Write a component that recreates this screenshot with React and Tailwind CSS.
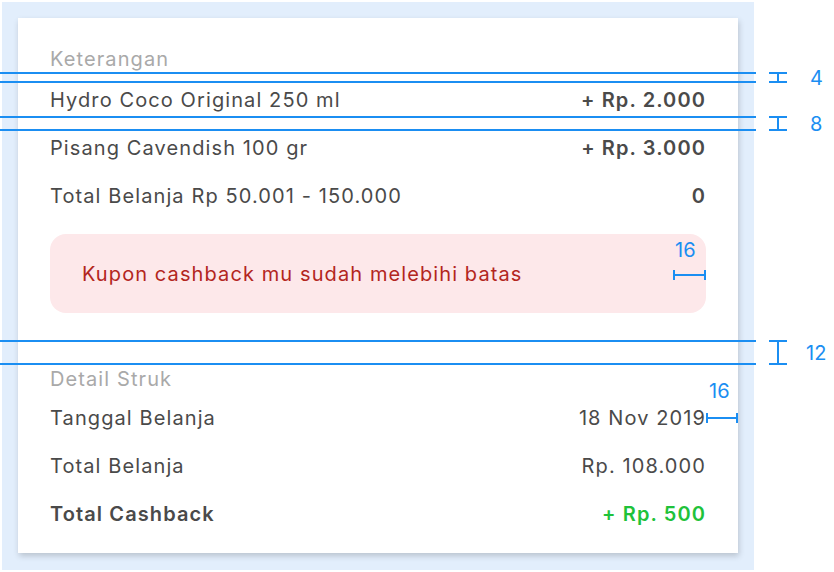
const font = { fontFamily: "Inter, 'Noto Sans', sans-serif" };

const Row = ({ label, value, labelBold, valueBold, green }) => (
  <div className="flex h-[34px] items-center justify-between">
    <span className={labelBold ? "font-semibold text-[#4a4a4a]" : "text-[#4a4a4a]"}>{label}</span>
    <span
      className={
        green
          ? "font-semibold text-[#1fc23a]"
          : valueBold
          ? "font-semibold text-[#4a4a4a]"
          : "text-[#4a4a4a]"
      }
    >
      {value}
    </span>
  </div>
);

const HLine = ({ top }) => (
  <div className="absolute left-0 h-[2px] w-[756px] bg-[#1b8ef2]" style={{ top }} />
);

const VBeam = ({ top, height, left, label, labelLeft }) => (
  <>
    <div className="absolute" style={{ top, left, height }}>
      <div className="absolute left-0 top-0 h-[2px] w-[18px] bg-[#1b8ef2]" />
      <div className="absolute bottom-0 left-0 h-[2px] w-[18px] bg-[#1b8ef2]" />
      <div className="absolute left-[8px] top-0 h-full w-[2px] bg-[#1b8ef2]" />
    </div>
    <div
      className="absolute text-[20px] leading-[24px] text-[#1b8ef2]"
      style={{ top: top + height / 2 - 12, left: labelLeft }}
    >
      {label}
    </div>
  </>
);

const HBeam = ({ top, left, width, label, labelLeft, labelTop }) => (
  <>
    <div className="absolute h-[10px]" style={{ top: top - 5, left, width }}>
      <div className="absolute left-0 top-0 h-full w-[2px] bg-[#1b8ef2]" />
      <div className="absolute right-0 top-0 h-full w-[2px] bg-[#1b8ef2]" />
      <div className="absolute left-0 top-[4px] h-[2px] w-full bg-[#1b8ef2]" />
    </div>
    <div
      className="absolute text-[20px] leading-[24px] text-[#1b8ef2]"
      style={{ top: labelTop - 12, left: labelLeft }}
    >
      {label}
    </div>
  </>
);

export default function App() {
  return (
    <div className="relative h-[572px] w-[834px] overflow-hidden bg-white" style={font}>
      <div className="ml-[2px] mt-[2px] h-[568px] w-[752px] bg-[#e2eefc] pl-[16px] pt-[16px]">
        <div className="h-[535px] w-[720px] bg-white px-[32px] pt-[27px] text-[20px] tracking-[1.1px] shadow-[1px_3px_6px_rgba(0,0,0,0.18)]">
          <div className="h-[28px] leading-[28px] text-[#a9a9a9]">Keterangan</div>
          <div className="mt-[10px] flex flex-col gap-[14px]">
            <Row label="Hydro Coco Original 250 ml" value="+ Rp. 2.000" valueBold />
            <Row label="Pisang Cavendish 100 gr" value="+ Rp. 3.000" valueBold />
            <Row label="Total Belanja Rp 50.001 - 150.000" value="0" valueBold />
          </div>
          <div className="mt-[21px] flex h-[79px] items-center rounded-[16px] bg-[#fde8ea] px-[32px] text-[#b3261e]">
            Kupon cashback mu sudah melebihi batas
          </div>
          <div className="mt-[51px] h-[30px] leading-[30px] text-[#a9a9a9]">Detail Struk</div>
          <div className="mt-[7px] flex flex-col gap-[14px]">
            <Row label="Tanggal Belanja" value="18 Nov 2019" />
            <Row label="Total Belanja" value="Rp. 108.000" />
            <Row label="Total Cashback" value="+ Rp. 500" labelBold green />
          </div>
        </div>
      </div>

      <HLine top={72} />
      <HLine top={81} />
      <HLine top={116} />
      <HLine top={129} />
      <HLine top={340} />
      <HLine top={363} />

      <VBeam top={72} height={11} left={769} label="4" labelLeft={810} />
      <VBeam top={116} height={15} left={769} label="8" labelLeft={810} />
      <VBeam top={340} height={25} left={769} label="12" labelLeft={806} />

      <HBeam top={275} left={673} width={33} label="16" labelLeft={675} labelTop={250} />
      <HBeam top={418} left={706} width={32} label="16" labelLeft={709} labelTop={391} />
    </div>
  );
}
